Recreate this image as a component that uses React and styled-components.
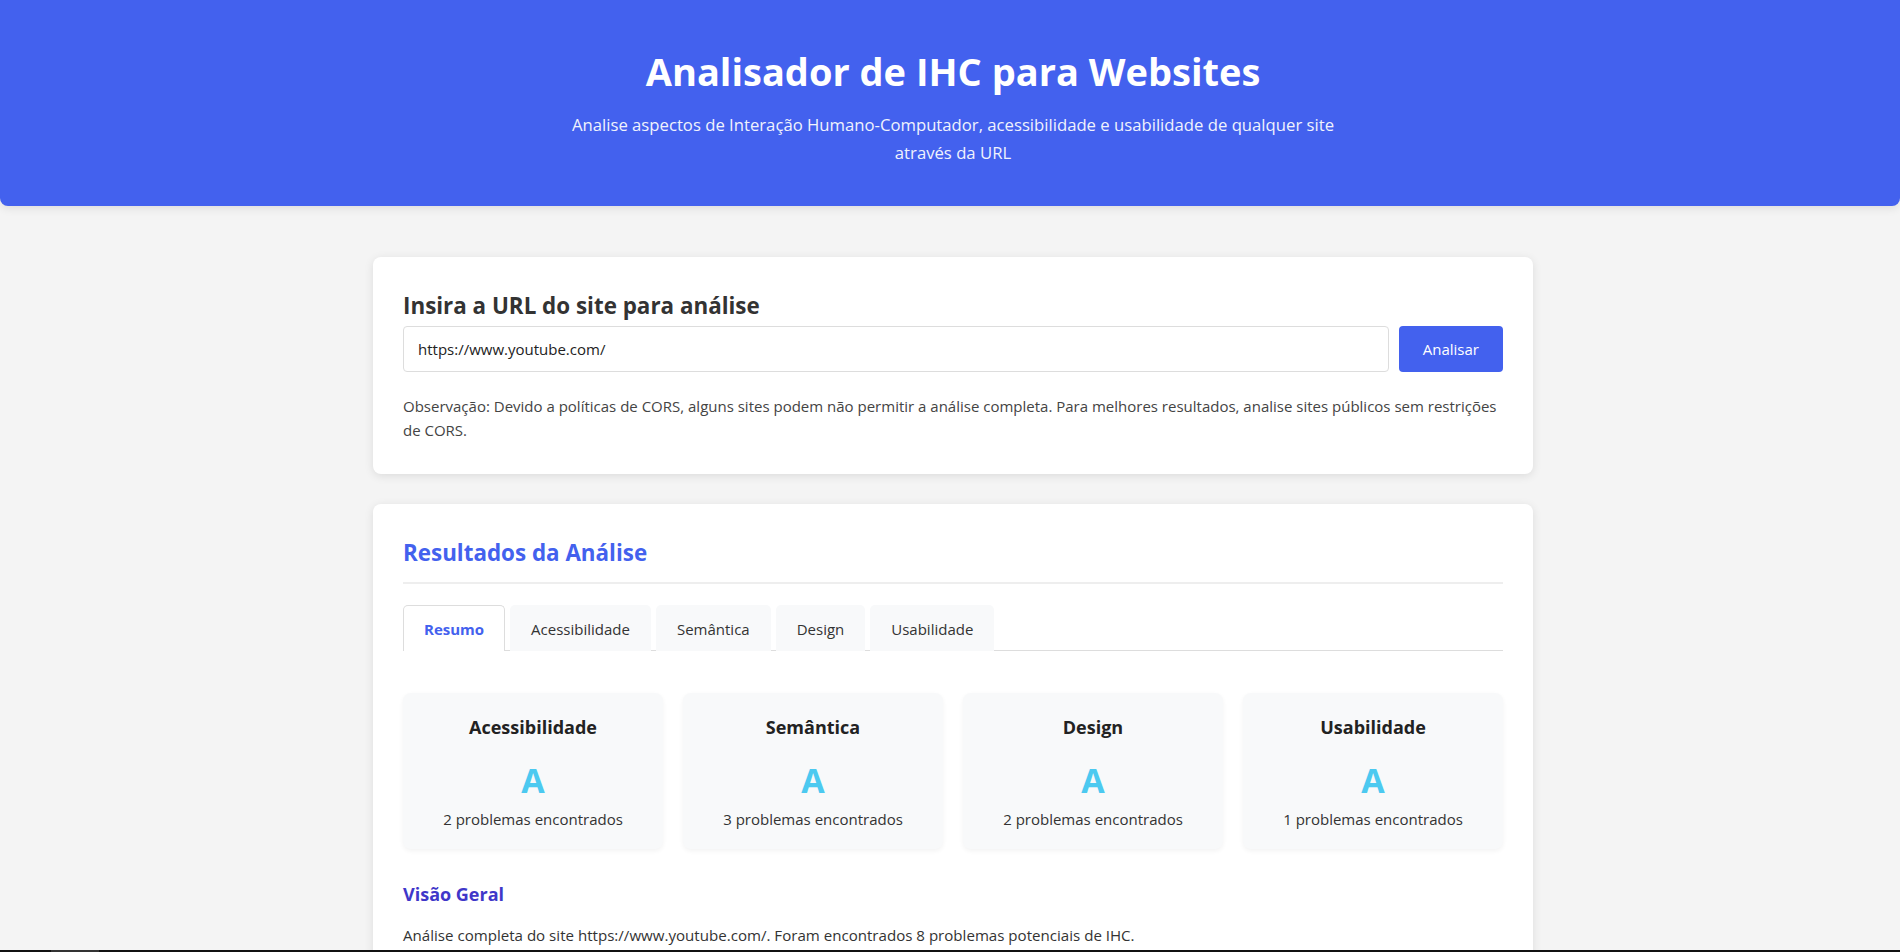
import React from "react";
import styled, { createGlobalStyle } from "styled-components";

const Global = createGlobalStyle`
  * { box-sizing: border-box; }
  html, body { margin: 0; padding: 0; }
  body {
    background: #f4f4f4;
    color: #333;
    font-family: "Segoe UI", "Open Sans", "Liberation Sans", sans-serif;
    font-size: 16px;
    line-height: 1.6;
  }
`;

const Header = styled.header`
  background: #4361ee;
  color: #fff;
  text-align: center;
  padding: 47px 17px 39px 23px;
  border-radius: 0 0 8px 8px;
  box-shadow: 0 2px 10px rgba(0, 0, 0, 0.1);
  margin-bottom: 51px;
`;

const Title = styled.h1`
  margin: 0 0 15px;
  font-size: 38px;
  font-weight: 700;
  line-height: 1.3;
`;

const Subtitle = styled.p`
  margin: 0 auto;
  max-width: 800px;
  font-size: 16.7px;
  line-height: 28px;
  opacity: 0.92;
`;

const Container = styled.main`
  max-width: 1200px;
  margin: 0 auto;
  padding: 0 17px 0 23px;
  display: flex;
  flex-direction: column;
  gap: 30px;
`;

const Card = styled.section`
  background: #fff;
  border-radius: 8px;
  box-shadow: 0 2px 10px rgba(0, 0, 0, 0.1);
  padding: 30px;
`;

const CardTitle = styled.h2`
  margin: 0;
  font-size: 22.4px;
  font-weight: 700;
  line-height: 38px;
  color: ${(p) => (p.$accent ? "#4361ee" : "#333")};
  ${(p) =>
    p.$underline &&
    `
    padding-bottom: 10px;
    border-bottom: 2px solid #eee;
    margin-bottom: 21px;
  `}
`;

const InputRow = styled.div`
  display: flex;
  gap: 10px;
  margin-top: 1px;
`;

const UrlInput = styled.input`
  flex: 1;
  height: 46px;
  padding: 0 14px;
  border: 1px solid #ddd;
  border-radius: 4px;
  font-family: inherit;
  font-size: 15px;
  color: #222;
  background: #fff;
  outline: none;
`;

const Button = styled.button`
  height: 46px;
  padding: 0 24px;
  background: #4361ee;
  color: #fff;
  border: none;
  border-radius: 4px;
  font-family: inherit;
  font-size: 15px;
  cursor: pointer;
`;

const Note = styled.p`
  margin: 22px 0 2px;
  font-size: 15px;
  line-height: 24px;
  color: #444;
`;

const Tabs = styled.div`
  display: flex;
  gap: 5px;
  border-bottom: 1px solid #ddd;
  margin-bottom: 42px;
`;

const Tab = styled.button`
  height: 46px;
  padding: 0 20px;
  font-family: inherit;
  font-size: 15px;
  border: 1px solid ${(p) => (p.$active ? "#ddd" : "transparent")};
  border-bottom: none;
  border-radius: 5px 5px 0 0;
  background: ${(p) => (p.$active ? "#fff" : "#f8f9fa")};
  color: ${(p) => (p.$active ? "#4361ee" : "#333")};
  font-weight: ${(p) => (p.$active ? 700 : 400)};
  margin-bottom: -1px;
  cursor: pointer;
`;

const ScoreGrid = styled.div`
  display: grid;
  grid-template-columns: repeat(4, 1fr);
  gap: 20px;
`;

const ScoreCard = styled.div`
  background: #f8f9fa;
  border-radius: 8px;
  box-shadow: 0 2px 5px rgba(0, 0, 0, 0.05);
  padding: 20px 20px 17px;
  text-align: center;
  display: flex;
  flex-direction: column;
  align-items: center;
`;

const ScoreTitle = styled.h3`
  margin: 0 0 12px;
  font-size: 18px;
  line-height: 29px;
  font-weight: 700;
  color: #222;
`;

const Grade = styled.div`
  font-size: 34px;
  line-height: 52px;
  font-weight: 700;
  color: #4cc9f0;
`;

const ScoreText = styled.p`
  margin: 0;
  font-size: 15px;
  line-height: 26px;
  color: #333;
`;

const SectionTitle = styled.h3`
  margin: 30px 0 12px;
  font-size: 18px;
  line-height: 31px;
  font-weight: 700;
  color: #3f37c9;
`;

const Body = styled.p`
  margin: 0 0 16px;
  font-size: 15.1px;
  line-height: 26px;
`;

const Taskbar = styled.div`
  position: fixed;
  left: 0;
  right: 0;
  bottom: 0;
  height: 2px;
  background: #111;
`;

const TaskbarItem = styled.div`
  position: absolute;
  left: 51px;
  width: 48px;
  top: 0;
  bottom: 0;
  background: #333;
`;

const scores = [
  { name: "Acessibilidade", grade: "A", count: 2 },
  { name: "Semântica", grade: "A", count: 3 },
  { name: "Design", grade: "A", count: 2 },
  { name: "Usabilidade", grade: "A", count: 1 },
];

const tabs = ["Resumo", "Acessibilidade", "Semântica", "Design", "Usabilidade"];

export default function App() {
  return (
    <>
      <Global />
      <Header>
        <Title>Analisador de IHC para Websites</Title>
        <Subtitle>
          Analise aspectos de Interação Humano-Computador, acessibilidade e
          usabilidade de qualquer site através da URL
        </Subtitle>
      </Header>
      <Container>
        <Card>
          <CardTitle>Insira a URL do site para análise</CardTitle>
          <InputRow>
            <UrlInput defaultValue="https://www.youtube.com/" />
            <Button>Analisar</Button>
          </InputRow>
          <Note>
            Observação: Devido a políticas de CORS, alguns sites podem não
            permitir a análise completa. Para melhores resultados, analise sites
            públicos sem restrições de CORS.
          </Note>
        </Card>
        <Card>
          <CardTitle $accent $underline>
            Resultados da Análise
          </CardTitle>
          <Tabs>
            {tabs.map((t, i) => (
              <Tab key={t} $active={i === 0}>
                {t}
              </Tab>
            ))}
          </Tabs>
          <ScoreGrid>
            {scores.map((s) => (
              <ScoreCard key={s.name}>
                <ScoreTitle>{s.name}</ScoreTitle>
                <Grade>{s.grade}</Grade>
                <ScoreText>{s.count} problemas encontrados</ScoreText>
              </ScoreCard>
            ))}
          </ScoreGrid>
          <SectionTitle>Visão Geral</SectionTitle>
          <Body>
            Análise completa do site https://www.youtube.com/. Foram encontrados
            8 problemas potenciais de IHC.
          </Body>
        </Card>
      </Container>
      <Taskbar>
        <TaskbarItem />
      </Taskbar>
    </>
  );
}
